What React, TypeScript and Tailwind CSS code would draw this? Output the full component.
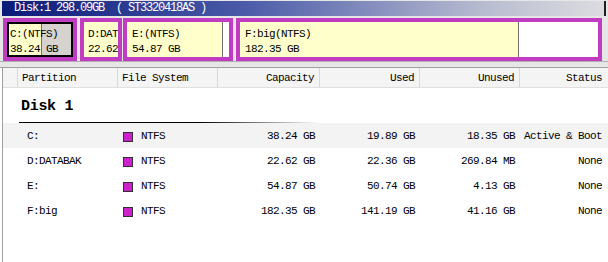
import React from 'react';

type Part = {
  name: string;
  fs: string;
  capacity: string;
  used: string;
  unused: string;
  status: string;
};

const parts: Part[] = [
  { name: 'C:', fs: 'NTFS', capacity: '38.24 GB', used: '19.89 GB', unused: '18.35 GB', status: 'Active & Boot' },
  { name: 'D:DATABAK', fs: 'NTFS', capacity: '22.62 GB', used: '22.36 GB', unused: '269.84 MB', status: 'None' },
  { name: 'E:', fs: 'NTFS', capacity: '54.87 GB', used: '50.74 GB', unused: '4.13 GB', status: 'None' },
  { name: 'F:big', fs: 'NTFS', capacity: '182.35 GB', used: '141.19 GB', unused: '41.16 GB', status: 'None' },
];

const mono = "font-['Liberation_Mono','DejaVu_Sans_Mono',monospace] text-[11px] tracking-[-0.6px]";

export default function App() {
  return (
    <div className={`w-[608px] h-[262px] overflow-hidden bg-white text-black ${mono}`}>
      {/* disk map */}
      <div className="h-[68px] bg-[#e6e6e6] border-b border-[#a0a0a0]">
        <div className="pt-[1px] pl-[2px]">
          <div className="h-[15px] w-[604px] border-r-2 border-[#202020] bg-[linear-gradient(to_right,#0a1a78,#4a5aa8_40%,#b8bcd0_80%,#dcdce0)] text-white pl-[12px] leading-[15px] text-[12px] tracking-[-1.2px] whitespace-pre">
            Disk:1 298.09GB  ( ST3320418AS )
          </div>
        </div>
        <div className="mt-[2px] h-[44px] flex pl-[3px] border-b border-[#b0b0b0]">
          <div className="w-[74px] border-4 border-[#c03cc0] bg-[#c03cc0]">
            <div className="h-full border-2 border-black bg-[linear-gradient(to_right,#ffffcc_32px,#707070_32px,#707070_33px,#d6d3ce_33px)] pl-[1px] pt-[3px] leading-[15px] overflow-hidden whitespace-nowrap">
              <div>C:(NTFS)</div>
              <div>38.24 GB</div>
            </div>
          </div>
          <div className="w-[42px] ml-[3px] border-4 border-[#c03cc0]">
            <div className="h-full bg-[#ffffcc] pl-[4px] pt-[5px] leading-[15px] overflow-hidden whitespace-nowrap">
              <div>D:DATABAK</div>
              <div>22.62 GB</div>
            </div>
          </div>
          <div className="w-[110px] ml-[1px] border-4 border-[#c03cc0]">
            <div className="h-full bg-[linear-gradient(to_right,#ffffcc_95px,#707070_95px,#707070_96px,#ffffff_96px)] pl-[5px] pt-[5px] leading-[15px] overflow-hidden whitespace-nowrap">
              <div>E:(NTFS)</div>
              <div>54.87 GB</div>
            </div>
          </div>
          <div className="w-[366px] ml-[3px] border-4 border-[#c03cc0]">
            <div className="h-full bg-[linear-gradient(to_right,#ffffcc_278px,#707070_278px,#707070_279px,#ffffff_279px)] pl-[5px] pt-[5px] leading-[15px] overflow-hidden whitespace-nowrap">
              <div>F:big(NTFS)</div>
              <div>182.35 GB</div>
            </div>
          </div>
        </div>
      </div>

      {/* partition list */}
      <div className="ml-[2px] border-l border-[#a0a0a0] h-[194px]">
        <div className="h-[20px] flex bg-[#f4f4f4] border-b border-[#e0e0e0] leading-[20px]">
          <div className="w-[15px] border-r border-[#d8d8d8]" />
          <div className="w-[100px] border-r border-[#d8d8d8] pl-[4px]">Partition</div>
          <div className="w-[100px] border-r border-[#d8d8d8] pl-[4px]">File System</div>
          <div className="w-[102px] border-r border-[#d8d8d8] pr-[5px] text-right">Capacity</div>
          <div className="w-[100px] border-r border-[#d8d8d8] pr-[5px] text-right">Used</div>
          <div className="w-[100px] border-r border-[#d8d8d8] pr-[5px] text-right">Unused</div>
          <div className="flex-1 pr-[6px] text-right">Status</div>
        </div>

        <div className="h-[35px] pl-[16px] pt-[11px]">
          <div className="font-bold text-[15px] tracking-[-0.3px] leading-[16px] pl-[2px]">Disk 1</div>
          <div className="mt-[7px] h-px w-[300px] bg-[linear-gradient(to_right,#000,#000_60%,#fff)]" />
        </div>

        {parts.map((p, i) => (
          <div key={p.name} className={`h-[25px] pt-[2px] flex items-center ${i === 0 ? 'bg-[#f3f3f3]' : ''}`}>
            <div className="w-[15px]" />
            <div className="w-[100px] pl-[9px]">{p.name}</div>
            <div className="w-[100px] pl-[5px] flex items-center gap-[8px]">
              <span className="w-[10px] h-[10px] bg-[#cc22cc] border border-[#303030]" />
              {p.fs}
            </div>
            <div className="w-[102px] pr-[5px] text-right">{p.capacity}</div>
            <div className="w-[100px] pr-[5px] text-right">{p.used}</div>
            <div className="w-[100px] pr-[5px] text-right">{p.unused}</div>
            <div className="flex-1 pr-[6px] text-right whitespace-nowrap">{p.status}</div>
          </div>
        ))}
      </div>
    </div>
  );
}
